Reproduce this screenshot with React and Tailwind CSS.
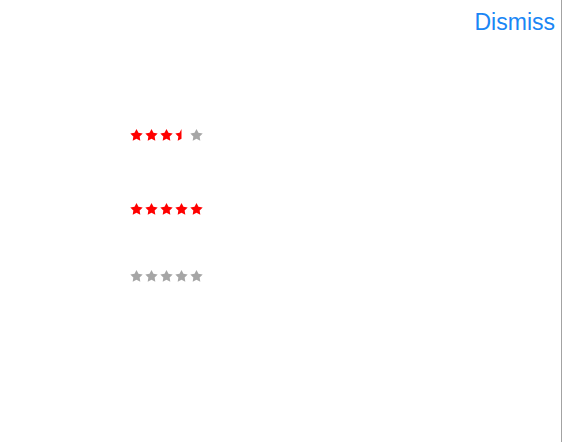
const RED = '#ff0000'
const GRAY = '#a6a6a6'

function Star({ fill = 'full' }) {
  const d = 'M6.5 0 L8.44 3.83 L12.68 4.49 L9.64 7.52 L10.32 11.76 L6.5 9.8 L2.68 11.76 L3.36 7.52 L0.32 4.49 L4.56 3.83 Z'
  if (fill === 'half') {
    return (
      <svg width="13" height="13" viewBox="0 0 13 13">
        <clipPath id="halfclip">
          <rect x="0" y="0" width="6.5" height="13" />
        </clipPath>
        <path d={d} fill={RED} clipPath="url(#halfclip)" />
      </svg>
    )
  }
  return (
    <svg width="13" height="13" viewBox="0 0 13 13">
      <path d={d} fill={fill === 'full' ? RED : GRAY} />
    </svg>
  )
}

function Rating({ value }) {
  const stars = [0, 1, 2, 3, 4].map((i) => {
    if (value >= i + 1) return 'full'
    if (value > i) return 'half'
    return 'empty'
  })
  return (
    <div className="flex gap-[2px] ml-[130px]">
      {stars.map((s, i) => (
        <Star key={i} fill={s} />
      ))}
    </div>
  )
}

export default function App() {
  return (
    <div className="w-[564px] h-[442px] bg-white flex" style={{ fontFamily: '"Liberation Sans", Arial, sans-serif' }}>
      <div className="w-[562px] h-full border-r border-[#a3a3a3] flex flex-col">
        <div className="flex justify-end pr-[6px] pt-[8px]">
          <button className="text-[23px] leading-[28px] text-[#1a86f5]">Dismiss</button>
        </div>
        <div className="mt-[93px]">
          <Rating value={3.5} />
        </div>
        <div className="mt-[61px]">
          <Rating value={5} />
        </div>
        <div className="mt-[54px]">
          <Rating value={0} />
        </div>
      </div>
    </div>
  )
}
